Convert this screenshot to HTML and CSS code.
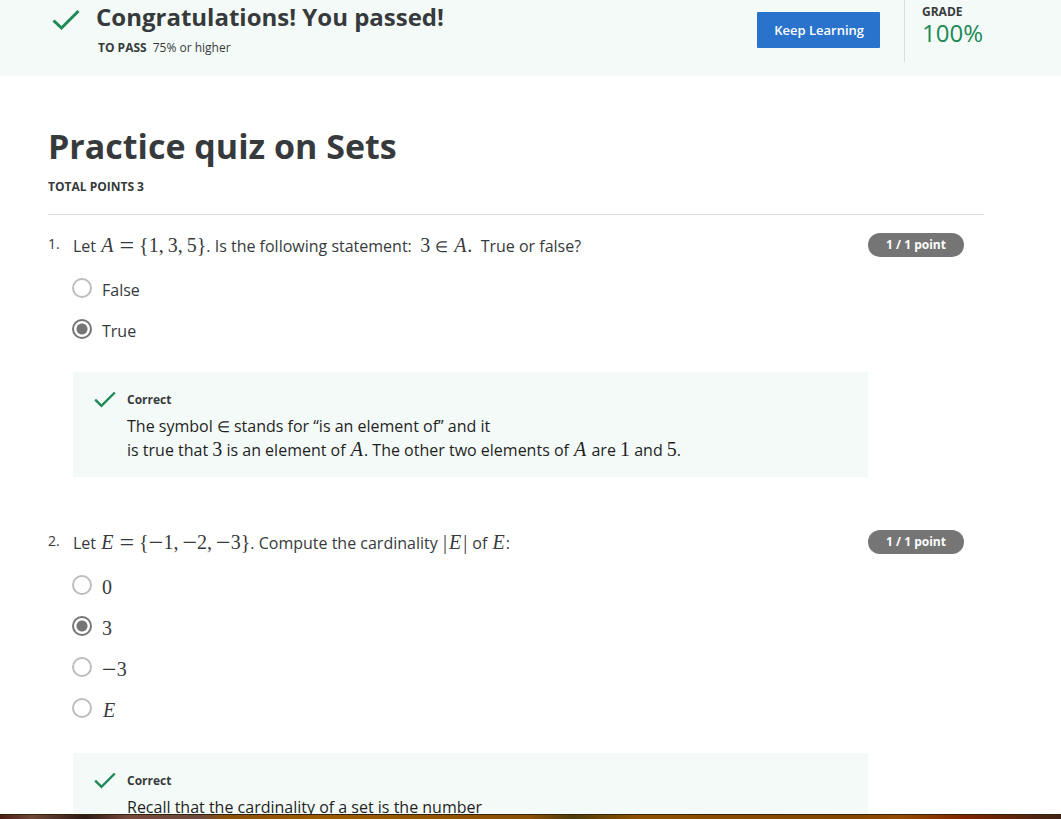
FILE: index.html
```
<!DOCTYPE html>
<html lang="en">
<head>
<meta charset="utf-8">
<title>Practice quiz on Sets</title>
<link rel="stylesheet" href="styles.css">
</head>
<body>
<div class="page">
  <header class="banner">
    <svg class="banner-check" viewBox="0 0 28 22" aria-hidden="true"><path d="M1.5 11.5 L9.5 19 L26.5 2"/></svg>
    <div class="banner-text">
      <h2 class="banner-title">Congratulations! You passed!</h2>
      <p class="to-pass"><strong>TO PASS</strong><span>75% or higher</span></p>
    </div>
    <button class="keep-learning" type="button">Keep Learning</button>
    <div class="grade">
      <span class="grade-label">GRADE</span>
      <span class="grade-value">100%</span>
    </div>
  </header>

  <main class="quiz">
    <div class="quiz-head">
      <h1 class="quiz-title">Practice quiz on Sets</h1>
      <p class="total">TOTAL POINTS 3</p>
    </div>

    <section class="question">
      <span class="number">1.</span>
      <div class="body">
        <p class="prompt">Let <span class="math"><i>A</i><span class="rel wide">=</span>{1<span class="comma">,</span>3<span class="comma">,</span>5}</span>. Is the following statement:&nbsp; <span class="math">3<span class="rel element">∈</span><i>A</i>.</span>&nbsp; True or false?</p>
        <div class="options">
          <label class="option"><input type="radio" name="q1"><span>False</span></label>
          <label class="option"><input type="radio" name="q1" checked><span>True</span></label>
        </div>
        <div class="feedback">
          <svg class="check" viewBox="0 0 28 22" aria-hidden="true"><path d="M1.5 10.5 L9.5 18.5 L26.5 1.5"/></svg>
          <div>
            <h3 class="verdict">Correct</h3>
            <p class="explain">The symbol <span class="math element">∈</span> stands for “is an element of” and it<br>is true that <span class="math">3</span> is an element of <span class="math"><i>A</i></span>. The other two elements of <span class="math"><i>A</i></span> are <span class="math">1</span> and <span class="math">5</span>.</p>
          </div>
        </div>
      </div>
      <span class="points">1 / 1 point</span>
    </section>

    <section class="question">
      <span class="number">2.</span>
      <div class="body">
        <p class="prompt">Let <span class="math"><i>E</i><span class="rel wide">=</span>{<span class="wide">−</span>1<span class="comma">,</span><span class="wide">−</span>2<span class="comma">,</span><span class="wide">−</span>3}</span>. Compute the cardinality <span class="math"><span class="bar">|</span><i>E</i><span class="bar">|</span></span> of <span class="math"><i>E</i></span>:</p>
        <div class="options formulas">
          <label class="option"><input type="radio" name="q2"><span class="math">0</span></label>
          <label class="option"><input type="radio" name="q2" checked><span class="math">3</span></label>
          <label class="option"><input type="radio" name="q2"><span class="math"><span class="wide">−</span>3</span></label>
          <label class="option"><input type="radio" name="q2"><span class="math"><i>E</i></span></label>
        </div>
        <div class="feedback">
          <svg class="check" viewBox="0 0 28 22" aria-hidden="true"><path d="M1.5 10.5 L9.5 18.5 L26.5 1.5"/></svg>
          <div>
            <h3 class="verdict">Correct</h3>
            <p class="explain">Recall that the cardinality of a set is the number</p>
          </div>
        </div>
      </div>
      <span class="points">1 / 1 point</span>
    </section>
  </main>
</div>
<div class="desktop"></div>
</body>
</html>
```
FILE: styles.css
```
* { box-sizing: border-box; }
body {
  margin: 0;
  height: 100vh;
  display: flex;
  flex-direction: column;
  overflow: hidden;
  background: #fff;
  color: #373a3c;
  font: 16px/24px "Open Sans", "Noto Sans", sans-serif;
}
h1, h2, h3, p { margin: 0; }
.page { flex: 1; min-height: 0; overflow: hidden; }

.banner {
  display: flex;
  align-items: flex-start;
  padding: 0 77px 14px 52px;
  background: #f4faf8;
}
.banner-check { width: 28px; height: 22px; margin: 9px 16px 0 0; }
.banner-check path, .check path { fill: none; stroke: #1d8956; stroke-width: 3; }
.banner-text { flex: 1; }
.banner-title { font-size: 24px; line-height: 34px; }
.to-pass { display: flex; gap: 6px; padding: 5px 0 0 2px; font-size: 12px; line-height: 18px; }
.keep-learning {
  height: 36px;
  margin: 12px 24px 0 0;
  padding: 0 16px 0 17px;
  border: 0;
  border-radius: 1px;
  background: #2a73cc;
  color: #fff;
  font: 600 13px/20px "Open Sans", "Noto Sans", sans-serif;
}
.grade {
  display: flex;
  flex-direction: column;
  height: 62px;
  padding: 5px 1px 0 17px;
  border-left: 1px solid #ddd;
}
.grade-label { font-size: 12px; line-height: 14px; font-weight: 700; }
.grade-value { font-size: 24px; line-height: 28px; color: #1d8956; }

.quiz { padding: 46px 77px 0 48px; }
.quiz-head { padding-bottom: 18px; border-bottom: 1px solid #ddd; }
.quiz-title { font-size: 34px; line-height: 48px; }
.total { padding-top: 8px; font-size: 12px; line-height: 18px; font-weight: 700; }

.question { display: flex; align-items: flex-start; padding: 18px 20px 35px 0; }
.number { width: 25px; font-size: 14px; line-height: 22px; }
.body { flex: 1; }
.prompt { line-height: 26px; }
.points {
  width: 96px;
  border-radius: 12px;
  background: #757575;
  color: #fff;
  font-size: 12px;
  line-height: 24px;
  font-weight: 700;
  text-align: center;
}

.math { font-family: "Liberation Serif", serif; font-size: 20px; line-height: 20px; white-space: nowrap; }
.math i { margin: 0 1px; }
.math .wide { font-size: 26px; line-height: 16px; vertical-align: -2px; }
.element { font-size: 15px; line-height: 20px; }
.rel { margin: 0 5px; }
.comma { margin-right: 4px; }
.bar { margin: 0 1px; }

.options { padding-top: 17px; }
.formulas { padding-bottom: 2px; }
.option { display: flex; align-items: flex-start; gap: 10px; height: 41px; margin-left: -1px; }
.option > span { line-height: 24px; padding-top: 2px; }
.option input {
  appearance: none;
  width: 20px;
  height: 20px;
  margin: 2px 0 0;
  border: 2px solid #bdbdbd;
  border-radius: 50%;
}
.option input:checked {
  border-color: #757575;
  background: radial-gradient(circle, #757575 5px, #fff 6px);
}

.feedback { display: flex; gap: 11px; margin-top: 14px; padding: 19px 21px 15px; background: #f4faf8; color: #1f1f1f; }
.check { width: 22px; height: 18px; }
.verdict { color: #373a3c; font-size: 12px; line-height: 18px; padding-bottom: 5px; }
.explain { line-height: 24px; }

.desktop {
  height: 5px;
  border-top: 1px solid #33240c;
  background: linear-gradient(90deg, #4c1d12, #704939 3%, #2c1a15 8%, #76493b 12%, #6d4a3d 19%, #8a5009 21%, #9c5b03 31%, #8a4f04 50%, #4e3b0b 54%, #8e5000 60%, #834600 80%, #944b00 85%, #812300 91%, #3e2416);
}
```
